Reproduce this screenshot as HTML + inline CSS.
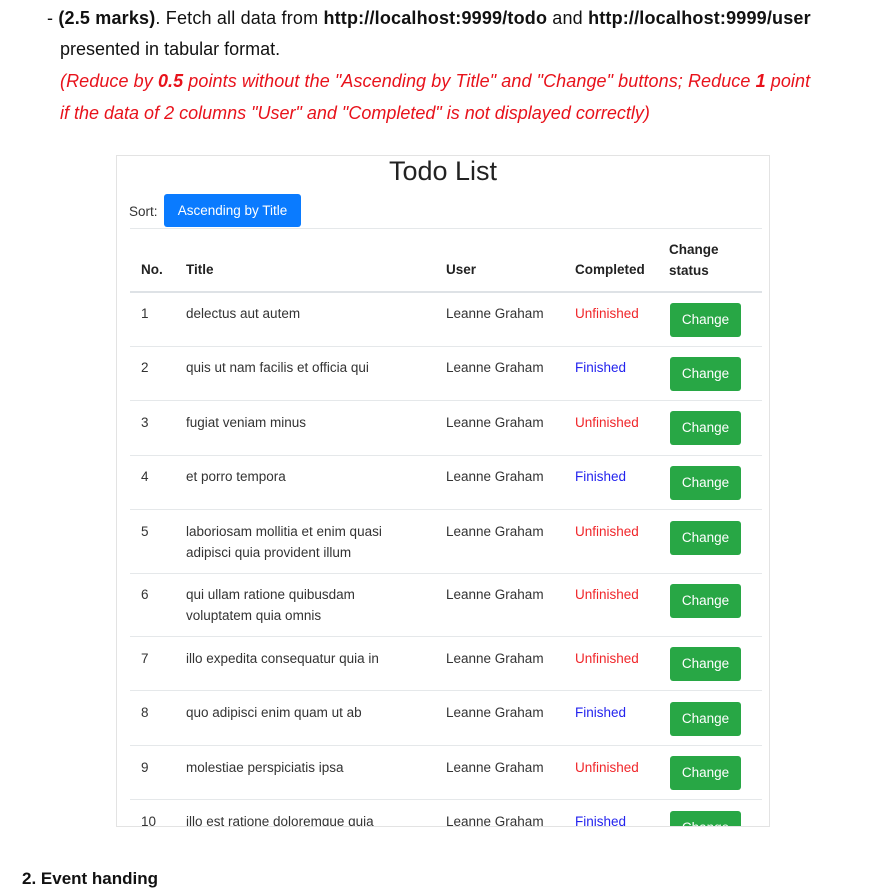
<!DOCTYPE html><html><head><style>
body{margin:0;width:892px;height:885px;background:#fff;position:relative;overflow:hidden;font-family:"Liberation Sans",sans-serif}
.a{position:absolute;white-space:nowrap}
.doc{font-family:"Liberation Sans",sans-serif;font-size:18px;color:#111}
.red{color:#e8121b;font-style:italic}
.box{position:absolute;left:116px;top:155px;width:652px;height:670px;border:1px solid #e3e3e3;overflow:hidden}
.t{font-size:13.5px;color:#333;line-height:21px}
.h{font-weight:bold;color:#222}
.hl{position:absolute;left:13px;width:632px;height:1px;background:#e5e8ea}
.btn{position:absolute;left:553px;width:71px;height:34px;background:#28a745;border-radius:3px;color:#fff;font-size:13.5px;line-height:34px;text-align:center}
.fin{color:#2323ee}.un{color:#f0262a}
</style></head><body>
<div class="a doc" style="left:47px;top:8px;letter-spacing:0.18px">- <b>(2.5 marks)</b>. Fetch all data from <b>http://localhost:9999/todo</b> and <b>http://localhost:9999/user</b></div>
<div class="a doc" style="left:60px;top:39px">presented in tabular format.</div>
<div class="a doc red" style="left:60px;top:71px;letter-spacing:0.08px">(Reduce by <b>0.5</b> points without the "Ascending by Title" and "Change" buttons; Reduce <b>1</b> point</div>
<div class="a doc red" style="left:60px;top:103px">if the data of 2 columns "User" and "Completed" is not displayed correctly)</div>
<div class="box">
<div class="a" style="left:0;width:652px;text-align:center;top:0;font-size:27px;color:#222">Todo List</div>
<div class="a t" style="left:12px;top:45px">Sort:</div>
<div class="a" style="left:47px;top:38px;width:137px;height:33px;background:#0a7bff;border-radius:3px;color:#fff;font-size:13.5px;line-height:33px;text-align:center">Ascending by Title</div>
<div class="hl" style="top:72px"></div>
<div class="a t h" style="left:24px;top:103px">No.</div>
<div class="a t h" style="left:69px;top:103px">Title</div>
<div class="a t h" style="left:329px;top:103px">User</div>
<div class="a t h" style="left:458px;top:103px">Completed</div>
<div class="a t h" style="left:552px;top:83px">Change<br>status</div>
<div class="hl" style="top:135px;height:2px;background:#dee2e6"></div>
<div class="a t" style="left:24px;top:147px">1</div><div class="a t" style="left:69px;top:147px">delectus aut autem</div><div class="a t" style="left:329px;top:147px">Leanne Graham</div><div class="a t un" style="left:458px;top:147px">Unfinished</div><div class="btn" style="top:147px">Change</div>
<div class="hl" style="top:190px"></div>
<div class="a t" style="left:24px;top:201px">2</div><div class="a t" style="left:69px;top:201px">quis ut nam facilis et officia qui</div><div class="a t" style="left:329px;top:201px">Leanne Graham</div><div class="a t fin" style="left:458px;top:201px">Finished</div><div class="btn" style="top:201px">Change</div>
<div class="hl" style="top:244px"></div>
<div class="a t" style="left:24px;top:256px">3</div><div class="a t" style="left:69px;top:256px">fugiat veniam minus</div><div class="a t" style="left:329px;top:256px">Leanne Graham</div><div class="a t un" style="left:458px;top:256px">Unfinished</div><div class="btn" style="top:255px">Change</div>
<div class="hl" style="top:299px"></div>
<div class="a t" style="left:24px;top:310px">4</div><div class="a t" style="left:69px;top:310px">et porro tempora</div><div class="a t" style="left:329px;top:310px">Leanne Graham</div><div class="a t fin" style="left:458px;top:310px">Finished</div><div class="btn" style="top:310px">Change</div>
<div class="hl" style="top:353px"></div>
<div class="a t" style="left:24px;top:365px">5</div><div class="a t" style="left:69px;top:365px">laboriosam mollitia et enim quasi<br>adipisci quia provident illum</div><div class="a t" style="left:329px;top:365px">Leanne Graham</div><div class="a t un" style="left:458px;top:365px">Unfinished</div><div class="btn" style="top:365px">Change</div>
<div class="hl" style="top:417px"></div>
<div class="a t" style="left:24px;top:428px">6</div><div class="a t" style="left:69px;top:428px">qui ullam ratione quibusdam<br>voluptatem quia omnis</div><div class="a t" style="left:329px;top:428px">Leanne Graham</div><div class="a t un" style="left:458px;top:428px">Unfinished</div><div class="btn" style="top:428px">Change</div>
<div class="hl" style="top:480px"></div>
<div class="a t" style="left:24px;top:492px">7</div><div class="a t" style="left:69px;top:492px">illo expedita consequatur quia in</div><div class="a t" style="left:329px;top:492px">Leanne Graham</div><div class="a t un" style="left:458px;top:492px">Unfinished</div><div class="btn" style="top:491px">Change</div>
<div class="hl" style="top:534px"></div>
<div class="a t" style="left:24px;top:546px">8</div><div class="a t" style="left:69px;top:546px">quo adipisci enim quam ut ab</div><div class="a t" style="left:329px;top:546px">Leanne Graham</div><div class="a t fin" style="left:458px;top:546px">Finished</div><div class="btn" style="top:546px">Change</div>
<div class="hl" style="top:589px"></div>
<div class="a t" style="left:24px;top:601px">9</div><div class="a t" style="left:69px;top:601px">molestiae perspiciatis ipsa</div><div class="a t" style="left:329px;top:601px">Leanne Graham</div><div class="a t un" style="left:458px;top:601px">Unfinished</div><div class="btn" style="top:600px">Change</div>
<div class="hl" style="top:643px"></div>
<div class="a t" style="left:24px;top:655px">10</div><div class="a t" style="left:69px;top:655px">illo est ratione doloremque quia</div><div class="a t" style="left:329px;top:655px">Leanne Graham</div><div class="a t fin" style="left:458px;top:655px">Finished</div><div class="btn" style="top:655px">Change</div>
</div>
<div class="a doc" style="left:22px;top:869px;font-weight:bold;font-size:17px">2. Event handing</div>
</body></html>
